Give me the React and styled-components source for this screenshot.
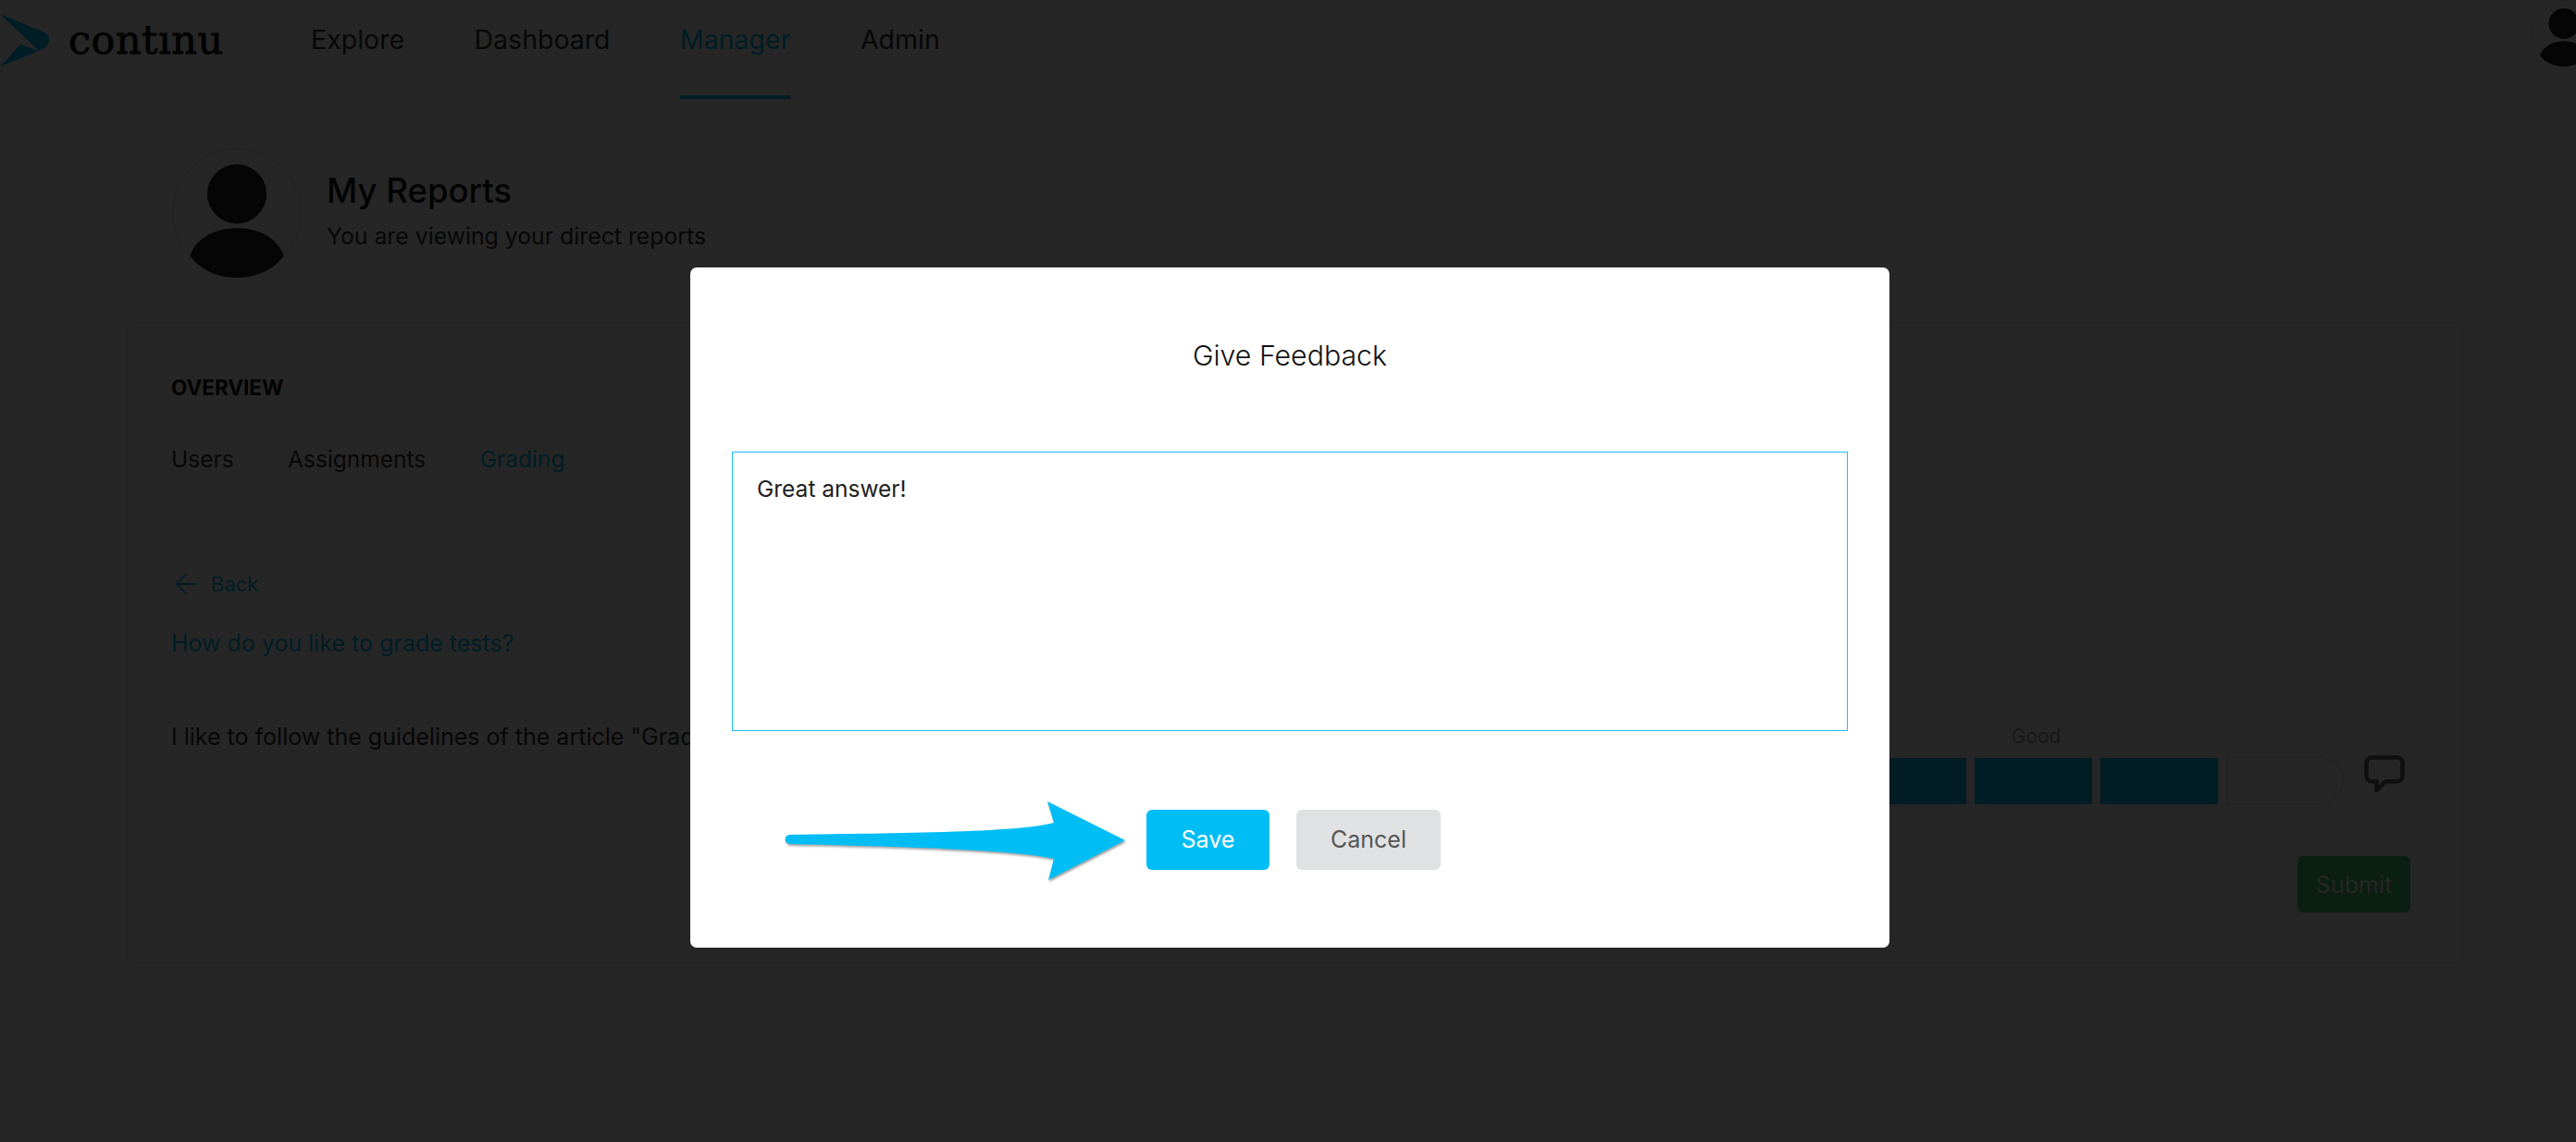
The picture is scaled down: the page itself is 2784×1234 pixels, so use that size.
import styled, { createGlobalStyle } from 'styled-components';

const GlobalStyle = createGlobalStyle`
  html, body {
    margin: 0;
    height: 100%;
    overflow: hidden;
    background: #fff;
    font-family: Inter, "Liberation Sans", sans-serif;
    color: #333;
  }
  * { box-sizing: border-box; }
`;

const accent = '#00bef5';

const Page = styled.div`
  width: 2784px;
  height: 1234px;
  overflow: hidden;
`;

const Nav = styled.nav`
  height: 107px;
  display: flex;
  align-items: flex-start;
  background: #fff;
`;

const Brand = styled.div`
  width: 336px;
  height: 86px;
  display: flex;
  align-items: center;
  gap: 20px;
  flex-shrink: 0;
`;

const BrandName = styled.span`
  font-family: "DejaVu Serif", serif;
  font-size: 43px;
  font-weight: 400;
  letter-spacing: 0.5px;
  -webkit-text-stroke: 0.8px #111;
  color: #111;
`;

const NavLinks = styled.div`
  display: flex;
  gap: 75.5px;
`;

const NavLink = styled.a`
  height: 107px;
  padding-top: 26px;
  font-size: 28.5px;
  line-height: 34px;
  color: ${p => (p.$active ? accent : '#333')};
  border-bottom: 4px solid ${p => (p.$active ? accent : 'transparent')};
`;

const NavAvatar = styled.div`
  margin-left: auto;
  margin-right: -23px;
  flex-shrink: 0;
  display: flex;
`;

const Main = styled.main`
  padding: 53px 124px 0 138px;
`;

const ProfileHeader = styled.header`
  display: flex;
  align-items: center;
  gap: 27px;
  padding-left: 48px;
`;

const ProfileText = styled.div`
  display: flex;
  flex-direction: column;
  gap: 12px;
  padding-bottom: 6px;
`;

const PageTitle = styled.h1`
  margin: 0;
  font-size: 36.5px;
  line-height: 44px;
  font-weight: 500;
  color: #111;
`;

const PageSubtitle = styled.p`
  margin: 0;
  font-size: 24.8px;
  line-height: 30px;
  color: #333;
`;

const Card = styled.section`
  margin-top: 50px;
  height: 689px;
  padding: 56px 55px 0 47px;
  background: #fff;
  box-shadow: 0 0 6px rgba(0, 0, 0, 0.12);
`;

const Overline = styled.h2`
  margin: 0;
  font-size: 22.5px;
  line-height: 26px;
  font-weight: 700;
  color: #111;
`;

const Tabs = styled.div`
  display: flex;
  gap: 58.5px;
  margin-top: 49px;
`;

const Tab = styled.a`
  font-size: 24.5px;
  line-height: 30px;
  color: ${p => (p.$active ? accent : '#333')};
`;

const BackLink = styled.a`
  display: flex;
  align-items: center;
  gap: 15px;
  margin: 106px 0 0 4px;
  font-size: 22px;
  line-height: 28px;
  color: ${accent};
`;

const Question = styled.a`
  display: block;
  margin-top: 35px;
  font-size: 25px;
  line-height: 30px;
  color: ${accent};
`;

const AnswerRow = styled.div`
  display: flex;
  justify-content: space-between;
  margin-top: 71px;
`;

const AnswerText = styled.p`
  margin: 0;
  font-size: 25px;
  line-height: 30px;
  color: #333;
`;

const Rating = styled.div`
  display: flex;
  align-items: flex-start;
  gap: 22px;
  padding-right: 6px;
`;

const Scale = styled.div`
  display: grid;
  grid-template-columns: repeat(5, 127px);
  grid-template-rows: 30px 53px;
  column-gap: 9px;
  row-gap: 6px;
`;

const ScaleLabel = styled.span`
  grid-column: 3;
  grid-row: 1;
  text-align: center;
  font-size: 21px;
  line-height: 30px;
  color: #999;
  transform: translateX(3px);
`;

const ScaleBar = styled.div`
  grid-row: 2;
  height: ${p => (p.$filled ? '50px' : '53px')};
  margin-top: ${p => (p.$filled ? '2px' : '0')};
  background: ${p => (p.$filled ? accent : '#fff')};
  border: ${p => (p.$filled ? 'none' : '2px solid #e8e8e8')};
  border-radius: ${p => (p.$filled ? '0' : '0 28px 28px 0')};
`;

const CommentButton = styled.div`
  margin-top: 35px;
  display: flex;
`;

const SubmitRow = styled.div`
  display: flex;
  justify-content: flex-end;
  margin-top: 55px;
`;

const SubmitButton = styled.button`
  width: 122px;
  height: 61px;
  border: none;
  border-radius: 6px;
  background: #4cc878;
  color: #fff;
  font-family: inherit;
  font-size: 25px;
`;

const Backdrop = styled.div`
  position: fixed;
  inset: 0;
  background: rgba(0, 0, 0, 0.85);
`;

const Modal = styled.div`
  position: fixed;
  left: 746px;
  top: 289px;
  width: 1296px;
  height: 735px;
  padding: 0 45px;
  background: #fff;
  border-radius: 7px;
`;

const ModalTitle = styled.h3`
  margin: 0;
  height: 199px;
  padding-top: 76px;
  text-align: center;
  font-size: 30.3px;
  line-height: 38px;
  font-weight: 300;
  color: #111;
`;

const FeedbackInput = styled.textarea`
  display: block;
  width: 100%;
  height: 302px;
  padding: 24px 26px;
  border: 1px solid #1fbdf5;
  border-radius: 0;
  outline: none;
  resize: none;
  font-family: inherit;
  font-size: 24.5px;
  line-height: 30px;
  color: #222;
`;

const ModalFooter = styled.div`
  position: relative;
  display: flex;
  gap: 29px;
  margin-top: 85px;
  padding-left: 448px;
`;

const Arrow = styled.svg`
  position: absolute;
  left: 54px;
  top: -12px;
  filter: drop-shadow(1px 2px 1px rgba(0, 0, 0, 0.35));
`;

const ModalButton = styled.button`
  width: ${p => (p.$primary ? '133px' : '156px')};
  height: 65px;
  padding: 0 0 2px;
  border: none;
  border-radius: 6px;
  background: ${p => (p.$primary ? accent : '#e0e1e3')};
  color: ${p => (p.$primary ? '#fff' : '#555')};
  font-family: inherit;
  font-size: 25px;
`;

const AvatarIcon = ({ size }) => (
  <svg width={size} height={size} viewBox="0 0 72 72">
    <circle cx="36" cy="36" r="35.5" fill="#fff" stroke="#eee" />
    <circle cx="36" cy="25.500" r="16.500" fill="#222" />
    <path d="M10 60 C13 50 24 44.500 36 44.500 C48 44.500 59 50 62 60 C56 68 46 72 36 72 C26 72 16 68 10 60 Z" fill="#222" />
  </svg>
);

const LogoMark = () => (
  <svg width="54" height="86" viewBox="0 0 54 86">
    <path d="M0 15 L48 35 Q54 38 53 44 Q52 50 46 53 L42 55 Z" fill={accent} />
    <path d="M22 48 L42 55 L0 72 Z" fill={accent} />
  </svg>
);

const BackArrow = () => (
  <svg width="24" height="24" viewBox="0 0 24 24" fill="none" stroke={accent} strokeWidth="1.800" strokeLinecap="round" strokeLinejoin="round">
    <path d="M23 12 H2 M12 1.500 L1.500 12 L12 22.500" />
  </svg>
);

const CommentIcon = () => (
  <svg width="44" height="41" viewBox="0 0 44 41" fill="none" stroke="#666" strokeWidth="4.500" strokeLinejoin="round">
    <path d="M9 2.500 H35 C39 2.500 41.500 5 41.500 9 V22 C41.500 26 39 28.500 35 28.500 H23 L13.500 38 V28.500 H9 C5 28.500 2.500 26 2.500 22 V9 C2.500 5 5 2.500 9 2.500 Z" />
  </svg>
);

export default function App() {
  return (
    <Page>
      <GlobalStyle />
      <Nav>
        <Brand>
          <LogoMark />
          <BrandName>contınu</BrandName>
        </Brand>
        <NavLinks>
          <NavLink>Explore</NavLink>
          <NavLink>Dashboard</NavLink>
          <NavLink $active>Manager</NavLink>
          <NavLink>Admin</NavLink>
        </NavLinks>
        <NavAvatar>
          <AvatarIcon size={72} />
        </NavAvatar>
      </Nav>

      <Main>
        <ProfileHeader>
          <AvatarIcon size={140} />
          <ProfileText>
            <PageTitle>My Reports</PageTitle>
            <PageSubtitle>You are viewing your direct reports</PageSubtitle>
          </ProfileText>
        </ProfileHeader>

        <Card>
          <Overline>OVERVIEW</Overline>
          <Tabs>
            <Tab>Users</Tab>
            <Tab>Assignments</Tab>
            <Tab $active>Grading</Tab>
          </Tabs>
          <BackLink>
            <BackArrow />
            Back
          </BackLink>
          <Question>How do you like to grade tests?</Question>
          <AnswerRow>
            <AnswerText>I like to follow the guidelines of the article "Grading</AnswerText>
            <Rating>
              <Scale>
                <ScaleLabel>Good</ScaleLabel>
                <ScaleBar $filled />
                <ScaleBar $filled />
                <ScaleBar $filled />
                <ScaleBar $filled />
                <ScaleBar />
              </Scale>
              <CommentButton>
                <CommentIcon />
              </CommentButton>
            </Rating>
          </AnswerRow>
          <SubmitRow>
            <SubmitButton>Submit</SubmitButton>
          </SubmitRow>
        </Card>
      </Main>

      <Backdrop />
      <Modal>
        <ModalTitle>Give Feedback</ModalTitle>
        <FeedbackInput readOnly defaultValue="Great answer!" />
        <ModalFooter>
          <Arrow width="380" height="96" viewBox="0 0 380 96">
            <path
              d="M8 9 C90 7 250 8 294 -4 L287 -27 L371 15 L288 58 L294 35 C250 24 90 21 8 19 C2 18 2 10 8 9 Z"
              transform="translate(0 30)"
              fill={accent}
            />
          </Arrow>
          <ModalButton $primary>Save</ModalButton>
          <ModalButton>Cancel</ModalButton>
        </ModalFooter>
      </Modal>
    </Page>
  );
}
